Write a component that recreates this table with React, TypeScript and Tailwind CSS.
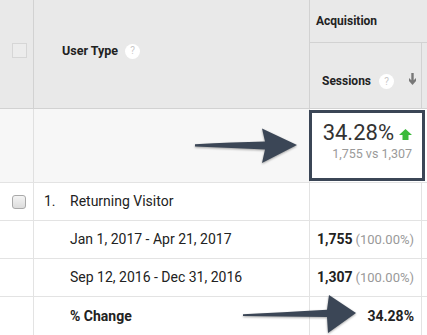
import type { ReactNode } from "react";

const font = { fontFamily: "Roboto, 'Liberation Sans', sans-serif" };

function HelpIcon() {
    return (
        <span className="inline-flex size-[15px] items-center justify-center rounded-full bg-white text-[10px] font-normal leading-none text-[#c8c8c8]">
            ?
        </span>
    );
}

function Pointer({ className, w, h, d }: { className: string; w: number; h: number; d: string }) {
    return (
        <svg className={className} width={w} height={h} viewBox={`0 0 ${w} ${h}`} fill="none">
            <path d={d} fill="#3b4656" style={{ filter: "drop-shadow(0 1px 1px rgba(0,0,0,0.35))" }} />
        </svg>
    );
}

function Row({ children, last }: { children: ReactNode; last?: boolean }) {
    return (
        <div
            className={`grid h-[38px] grid-cols-[34px_276px_112px_5px] ${last ? "" : "border-b border-[#e3e3e3]"}`}
        >
            {children}
        </div>
    );
}

export default function App() {
    return (
        <div className="relative h-[335px] w-[427px] overflow-hidden bg-white text-[#222]" style={font}>
            {/* header */}
            <div className="grid h-[109px] grid-cols-[34px_276px_117px] border-b border-[#d2d2d2] bg-[#e9e9e9]">
                <div className="flex items-center justify-center border-r border-[#d2d2d2] pl-[6px] pb-[8px]">
                    <span className="size-[15px] border border-[#d6d6d6] bg-[#ececec]" />
                </div>
                <div className="flex items-center gap-[7px] border-r border-[#d2d2d2] pl-[28px] pb-[6px] text-[12.5px] font-bold">
                    User Type
                    <HelpIcon />
                </div>
                <div className="flex flex-col">
                    <div className="flex h-[43px] items-center border-b border-[#d2d2d2] pl-[6px] text-[12px] font-bold">
                        Acquisition
                    </div>
                    <div className="grid flex-1 grid-cols-[112px_5px]">
                        <div className="flex items-center border-r border-[#d2d2d2] pl-[12px] pt-[10px] text-[12px] font-bold">
                            Sessions
                            <span className="ml-[8px]">
                                <HelpIcon />
                            </span>
                            <svg className="ml-[14px] mb-[3px]" width="9" height="12" viewBox="0 0 9 12">
                                <path d="M3.3 0h2.4v7.2L8 5v3l-3.5 4L1 8V5l2.3 2.2z" fill="#787878" />
                            </svg>
                        </div>
                        <div />
                    </div>
                </div>
            </div>

            {/* summary row */}
            <div className="grid h-[74px] grid-cols-[34px_276px_117px] border-b border-[#e3e3e3] bg-[#f7f7f7]">
                <div className="border-r border-[#e0e0e0]" />
                <div className="border-r border-[#e0e0e0]" />
                <div className="flex items-center bg-white">
                    <div className="ml-[-1px] flex h-[71px] w-[116px] flex-col items-end border-[3px] border-[#3b4656] pr-[10px] pt-[6px]">
                        <div className="flex items-center gap-[5px] text-[22px] leading-[28px] text-[#333]">
                            34.28%
                            <svg width="13" height="11" viewBox="0 0 13 11" className="mt-[2px]">
                                <path d="M6.5 0L13 6H9.5v5h-6V6H0z" fill="#3cba3c" />
                            </svg>
                        </div>
                        <div className="text-[12.5px] leading-[14px] text-[#9a9a9a]">1,755 vs 1,307</div>
                    </div>
                </div>
            </div>

            {/* body */}
            <Row>
                <div className="flex items-center justify-center border-r border-[#e3e3e3] pl-[5px]">
                    <span className="size-[14px] rounded-[3px] border border-[#a9a9a9] bg-gradient-to-b from-[#f4f4f4] to-[#dcdcdc]" />
                </div>
                <div className="flex items-center border-r border-[#e3e3e3] text-[14px]">
                    <span className="w-[36px] pl-[10px]">1.</span>
                    Returning Visitor
                </div>
                <div className="border-r border-[#e3e3e3]" />
                <div />
            </Row>
            <Row>
                <div className="border-r border-[#e3e3e3]" />
                <div className="flex items-center border-r border-[#e3e3e3] pl-[36px] text-[14px]">
                    Jan 1, 2017 - Apr 21, 2017
                </div>
                <div className="flex items-center justify-end border-r border-[#e3e3e3] pr-[7px] text-[14px]">
                    <span className="font-bold">1,755</span>
                    <span className="ml-[3px] text-[13px] text-[#999]">(100.00%)</span>
                </div>
                <div />
            </Row>
            <Row>
                <div className="border-r border-[#e3e3e3]" />
                <div className="flex items-center border-r border-[#e3e3e3] pl-[36px] text-[14px]">
                    Sep 12, 2016 - Dec 31, 2016
                </div>
                <div className="flex items-center justify-end border-r border-[#e3e3e3] pr-[7px] text-[14px]">
                    <span className="font-bold">1,307</span>
                    <span className="ml-[3px] text-[13px] text-[#999]">(100.00%)</span>
                </div>
                <div />
            </Row>
            <Row last>
                <div className="border-r border-[#e3e3e3]" />
                <div className="flex items-center border-r border-[#e3e3e3] pl-[36px] text-[14px] font-bold">
                    % Change
                </div>
                <div className="flex items-center justify-end border-r border-[#e3e3e3] pr-[7px] text-[14px] font-bold">
                    34.28%
                </div>
                <div />
            </Row>

            {/* callout arrows */}
            <Pointer
                className="absolute left-[193px] top-[126px]"
                w={110}
                h={40}
                d="M2 18.2 Q40 16.5 72 15.6 L69 2.5 L104 19 L69 37 L72 23.5 Q40 22 2 20.4 Z"
            />
            <Pointer
                className="absolute left-[241px] top-[292px]"
                w={120}
                h={43}
                d="M2 22.2 Q40 20.5 86 17.8 L88 3 L115 21 L87 41 L86 25 Q40 24.5 2 24 Z"
            />
        </div>
    );
}
